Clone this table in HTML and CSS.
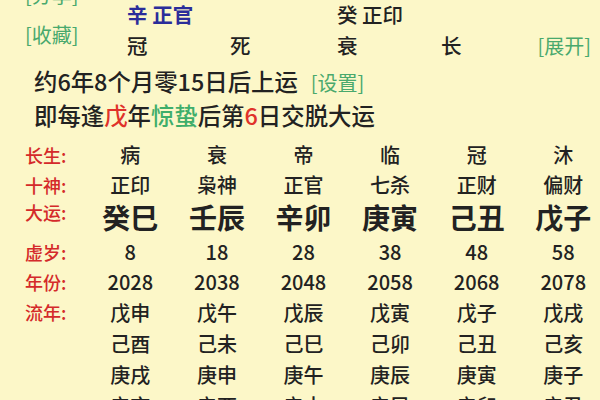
FILE: index.html
```html
<!DOCTYPE html>
<html lang="zh-CN">
<head>
<meta charset="utf-8">
<link rel="stylesheet" href="styles.css">
</head>
<body>
<div class="page">
  <div class="head">
    <div class="actions">
      <span class="link">[分享]</span>
      <span class="link">[收藏]</span>
    </div>
    <div class="pillars">
      <div class="prow">
        <span class="blue">辛 正官</span><span></span><span>癸 正印</span><span></span>
      </div>
      <div class="prow">
        <span>冠</span><span>死</span><span>衰</span><span class="last">长<span class="link">[展开]</span></span>
      </div>
    </div>
  </div>
  <div class="info">
    <p class="line">约6年8个月零15日后上运<span class="link set">[设置]</span></p>
    <p class="line">即每逢<span class="red">戊</span>年<span class="green">惊蛰</span>后第<span class="red">6</span>日交脱大运</p>
  </div>
  <div class="table">
    <div class="row r-sheng"><span class="lab">长生:</span><span>病</span><span>衰</span><span>帝</span><span>临</span><span>冠</span><span>沐</span></div>
    <div class="row r-shen"><span class="lab">十神:</span><span>正印</span><span>枭神</span><span>正官</span><span>七杀</span><span>正财</span><span>偏财</span></div>
    <div class="row r-yun"><span class="lab">大运:</span><span class="big">癸巳</span><span class="big">壬辰</span><span class="big">辛卯</span><span class="big">庚寅</span><span class="big">己丑</span><span class="big">戊子</span></div>
    <div class="row r-age"><span class="lab">虚岁:</span><span>8</span><span>18</span><span>28</span><span>38</span><span>48</span><span>58</span></div>
    <div class="row r-year"><span class="lab">年份:</span><span>2028</span><span>2038</span><span>2048</span><span>2058</span><span>2068</span><span>2078</span></div>
    <div class="row r-ln"><span class="lab">流年:</span><span>戊申</span><span>戊午</span><span>戊辰</span><span>戊寅</span><span>戊子</span><span>戊戌</span></div>
    <div class="row r-ln"><span class="lab"></span><span>己酉</span><span>己未</span><span>己巳</span><span>己卯</span><span>己丑</span><span>己亥</span></div>
    <div class="row r-ln"><span class="lab"></span><span>庚戌</span><span>庚申</span><span>庚午</span><span>庚辰</span><span>庚寅</span><span>庚子</span></div>
    <div class="row r-ln"><span class="lab"></span><span>辛亥</span><span>辛酉</span><span>辛未</span><span>辛巳</span><span>辛卯</span><span>辛丑</span></div>
  </div>
</div>
</body>
</html>
```
FILE: styles.css
```css
html, body {
  margin: 0;
  padding: 0;
}
body {
  width: 600px;
  height: 400px;
  overflow: hidden;
  background: #fcf7c8;
  font-family: "Noto Sans CJK SC", "Noto Sans", sans-serif;
  font-weight: 500;
  color: #222;
}
.page {
  width: 600px;
}
.link {
  color: #49a96d;
  font-size: 20px;
  font-weight: 400;
}
.red { color: #e0322a; }
.green { color: #3fae6b; }
.blue { color: #2b2d9a; font-weight: bold; }

.head {
  display: flex;
  margin-top: -25px;
  height: 87px;
}
.actions {
  width: 127px;
  display: flex;
  flex-direction: column;
  padding-left: 25px;
  box-sizing: border-box;
}
.actions .link {
  line-height: 40px;
}
.pillars {
  flex: 1;
  padding-top: 24px;
}
.prow {
  display: grid;
  grid-template-columns: 103px 107px 104px 1fr;
  font-size: 20.5px;
  line-height: 31px;
}
.prow .last {
  display: flex;
  justify-content: space-between;
  padding-right: 9px;
}

.info {
  padding-left: 34px;
  margin-top: 3px;
}
.line {
  margin: 0;
  font-size: 23.4px;
  line-height: 33px;
}
.line .set {
  margin-left: 13px;
}

.table {
  margin-top: 8px;
}
.row {
  display: grid;
  grid-template-columns: 87px repeat(6, 86.6px);
  font-size: 20px;
  line-height: 30px;
  text-align: center;
}
.row .lab {
  text-align: left;
  padding-left: 25px;
  color: #d42a2a;
  font-size: 18px;
}
.r-yun {
  line-height: 34px;
  height: 34px;
  align-items: start;
}
.r-yun .lab {
  line-height: 24px;
}
.r-yun .big {
  font-size: 28px;
  font-weight: bold;
  line-height: 34px;
}
.r-age {
  margin-top: 3px;
}
.r-ln {
  line-height: 31px;
}
```
